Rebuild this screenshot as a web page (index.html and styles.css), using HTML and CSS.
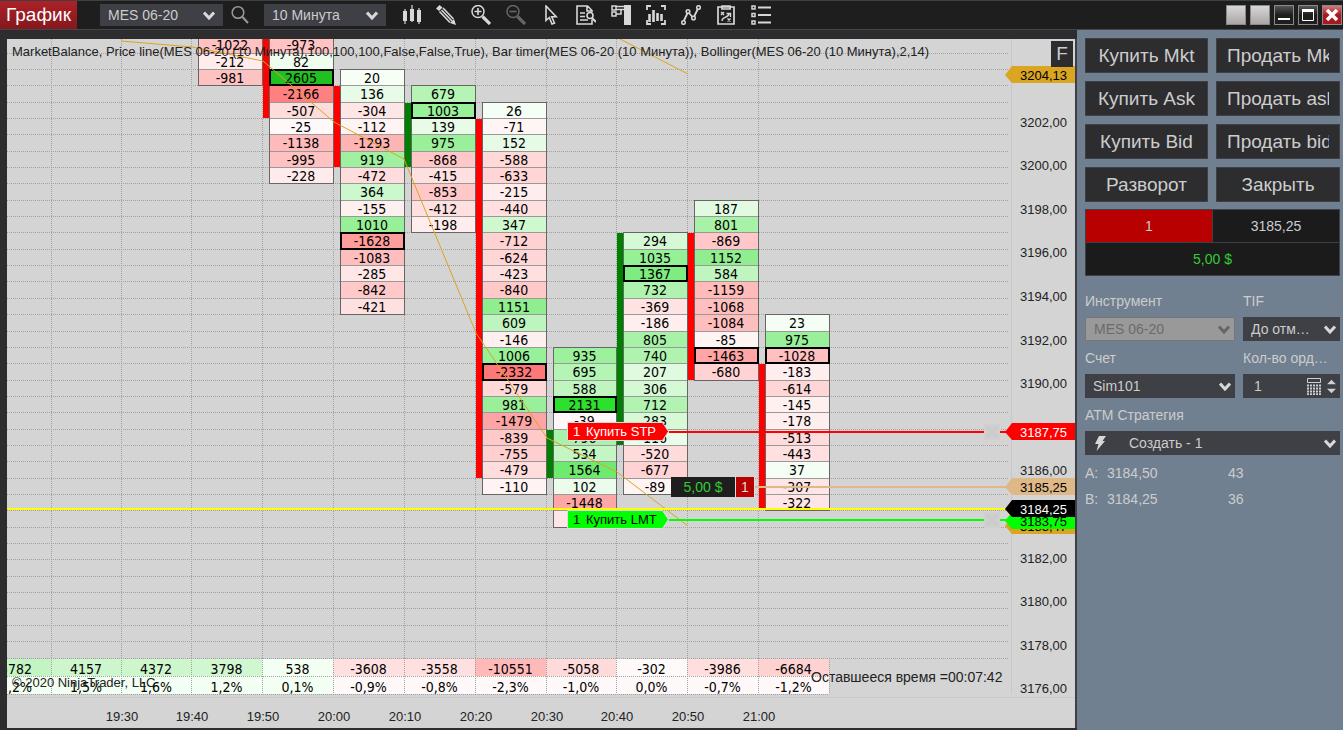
FILE: index.html
```html
<!DOCTYPE html>
<html lang="ru">
<head>
  <meta charset="UTF-8" />
  <meta name="viewport" content="width=device-width, initial-scale=1" />
  <title>График</title>
  <link rel="stylesheet" href="styles.css">
</head>
<body>
  <header class="toolbar">
    <h1 class="title">График</h1>

    <div class="select top-instrument">
      <select aria-label="Инструмент графика"><option>MES 06-20</option></select>
      <svg class="chevron" viewBox="0 0 12 9"><path d="M1 1.5l5 5.5 5-5.5"/></svg>
    </div>
    <button class="tool search" type="button" aria-label="Поиск">
      <svg viewBox="0 0 20 20"><circle cx="8" cy="7.500" r="5.800" stroke-width="1.500"/><path d="M12.500 12l5.500 6" stroke-width="2"/></svg>
    </button>
    <div class="select top-period">
      <select aria-label="Период"><option>10 Минута</option></select>
      <svg class="chevron" viewBox="0 0 12 9"><path d="M1 1.5l5 5.5 5-5.5"/></svg>
    </div>

    <nav class="tools">
      <button class="tool" type="button" aria-label="Тип бара">
        <svg viewBox="0 0 20 20"><path d="M4 4v15M11 0v17M18 3v16" stroke-width="1.200"/><path d="M4 6v10M11 4v12M18 5v12" stroke-width="4"/></svg>
      </button>
      <button class="tool" type="button" aria-label="Рисование">
        <svg viewBox="0 0 20 20"><path class="fill" d="M20 20l-6-2 4-4z"/><path class="fill" d="M0 3.500L3.500 0l3 2.500-3.500 3.500z"/><path d="M3.500 6.500l10.500 11M7 3l10.500 11M5.500 5l10.500 11" stroke-width="1.600"/></svg>
      </button>
      <button class="tool" type="button" aria-label="Увеличить">
        <svg viewBox="0 0 20 20"><circle cx="7" cy="6.500" r="6" stroke-width="1.500"/><path d="M3.500 6.500h7M7 3v7" stroke-width="1.600"/><path d="M11.500 11.500l7.500 7.500" stroke-width="3.200"/></svg>
      </button>
      <button class="tool dim" type="button" aria-label="Уменьшить">
        <svg viewBox="0 0 20 20"><circle cx="7" cy="6.500" r="6" stroke-width="1.500"/><path d="M3.500 6.500h7" stroke-width="1.600"/><path d="M11.500 11.500l7.500 7.500" stroke-width="3.200"/></svg>
      </button>
      <button class="tool" type="button" aria-label="Курсор">
        <svg viewBox="0 0 20 20"><path d="M5 1v14.500l3.300-3 2.700 6.500 2.500-1-2.800-6.200h4.500z" stroke-width="1.600"/></svg>
      </button>
      <button class="tool" type="button" aria-label="Окно данных">
        <svg viewBox="0 0 20 20"><path d="M16 14.500V19H1V1h10.500L16 5.500V7M11 1v5h5M4 8h5M4 11.500h5M4 15h8" stroke-width="1.600"/><circle cx="14" cy="10.500" r="3" stroke-width="1.600"/><path d="M16 13l4 4" stroke-width="2"/></svg>
      </button>
      <button class="tool" type="button" aria-label="Торговля с графика">
        <svg viewBox="0 0 20 20"><path class="fill" d="M13 0h7v20h-7z"/><path d="M1 1h4v4H1zM1 7h4v4H1zM5 1.500h8M5 4.500h8M5 9h5V4.500" stroke-width="1.500"/></svg>
      </button>
      <button class="tool" type="button" aria-label="Индикаторы">
        <svg viewBox="0 0 20 20"><path d="M5 1H1v4M15 1h4v4M5 19H1v-4M15 19h4v-4" stroke-width="1.800"/><path d="M3.500 9v8M7.500 5v12M11.500 8v8M15.500 9v7" stroke-width="2.600"/></svg>
      </button>
      <button class="tool" type="button" aria-label="Ряды данных">
        <svg viewBox="0 0 20 20"><path d="M2 17.500L7 7l5.500 6 5-10.500" stroke-width="1.800"/><circle class="dot" cx="2.500" cy="17.500" r="1.800" stroke-width="1.500"/><circle class="dot" cx="7" cy="6.500" r="1.800" stroke-width="1.500"/><circle class="dot" cx="12.500" cy="13" r="1.800" stroke-width="1.500"/><circle class="dot" cx="17.500" cy="2.500" r="1.800" stroke-width="1.500"/></svg>
      </button>
      <button class="tool" type="button" aria-label="Стратегии">
        <svg viewBox="0 0 20 20"><path d="M2 2h16v17H2zM6 1h8v3H6z" stroke-width="1.700"/><path d="M5 7l3 3M8 7l-3 3M11.500 13.500l3 3M14.500 13.500l-3 3M6 16c0-5 6-2 7.500-8M10.500 8.500h4v3.500" stroke-width="1.400"/></svg>
      </button>
      <button class="tool" type="button" aria-label="Свойства">
        <svg viewBox="0 0 20 20"><path d="M1 1h3v3H1zM1 8.500h3v3H1zM1 16h3v3H1z" stroke-width="1.500"/><path d="M7 2.500h13M7 10h13M7 17.500h13" stroke-width="1.800"/></svg>
      </button>
    </nav>

    <div class="window-buttons">
      <button class="win light" type="button" aria-label="Связь инструмента"></button>
      <button class="win light" type="button" aria-label="Связь интервала"></button>
      <button class="win" type="button" aria-label="Свернуть"><svg viewBox="0 0 18 18"><path d="M3 13h12" stroke-width="2"/></svg></button>
      <button class="win" type="button" aria-label="Развернуть"><svg viewBox="0 0 18 18"><path d="M3.500 14.500v-10h11v10z" stroke-width="1"/><path d="M3 4.500h12" stroke-width="3"/></svg></button>
      <button class="win close" type="button" aria-label="Закрыть окно"><svg viewBox="0 0 18 18"><path d="M4 4l10 10M14 4L4 14" stroke-width="3.500"/></svg></button>
    </div>
  </header>

  <main class="workspace">
    <section class="chart">
      <svg id="plot" role="img" aria-label="Кластерный график MES 06-20"></svg>
      <button class="fixed-scale" type="button">F</button>
    </section>

    <aside class="trader">
      <div class="orders">
        <button type="button"><span>Купить Mkt</span></button>
        <button type="button"><span>Продать Mkt</span></button>
        <button type="button"><span>Купить Ask</span></button>
        <button type="button"><span>Продать ask</span></button>
        <button type="button"><span>Купить Bid</span></button>
        <button type="button"><span>Продать bid</span></button>
        <button type="button"><span>Разворот</span></button>
        <button type="button"><span>Закрыть</span></button>
      </div>

      <div class="position">
        <div class="qty">1</div>
        <div>3185,25</div>
        <div class="pnl">5,00 $</div>
      </div>

      <form class="settings">
        <div class="field">
          <label for="instrument">Инструмент</label>
          <div class="select disabled">
            <select id="instrument" disabled><option>MES 06-20</option></select>
            <svg class="chevron" viewBox="0 0 12 9"><path d="M1 1.5l5 5.5 5-5.5"/></svg>
          </div>
        </div>
        <div class="field">
          <label for="tif">TIF</label>
          <div class="select">
            <select id="tif"><option>До отм…</option></select>
            <svg class="chevron" viewBox="0 0 12 9"><path d="M1 1.5l5 5.5 5-5.5"/></svg>
          </div>
        </div>
        <div class="field">
          <label for="account">Счет</label>
          <div class="select">
            <select id="account"><option>Sim101</option></select>
            <svg class="chevron" viewBox="0 0 12 9"><path d="M1 1.5l5 5.5 5-5.5"/></svg>
          </div>
        </div>
        <div class="field">
          <label for="orderQty">Кол-во орд…</label>
          <div class="number">
            <input id="orderQty" type="text" inputmode="numeric" value="1">
            <svg class="calc" viewBox="0 0 14 17"><path d="M.5.500h13v4H.5z"/><path class="keys" d="M0 7.500h14M0 10.500h14M0 13.500h14M0 16.200h14"/></svg>
            <svg class="spin" viewBox="0 0 10 17"><path d="M0 6l5-5 5 5zM0 11l5 5 5-5z"/></svg>
          </div>
        </div>
        <div class="field wide">
          <label for="atm">ATM Стратегия</label>
          <div class="select atm">
            <select id="atm"><option>Создать - 1</option></select>
            <svg class="bolt" viewBox="0 0 12 15"><path d="M5 0h7L8.500 5H11L2.500 15l2-7H1z"/></svg>
            <svg class="chevron" viewBox="0 0 12 9"><path d="M1 1.5l5 5.5 5-5.5"/></svg>
          </div>
        </div>
      </form>

      <dl class="quotes">
        <dt>A:</dt><dd>3184,50</dd><dd>43</dd>
        <dt>B:</dt><dd>3184,25</dd><dd>36</dd>
      </dl>
    </aside>
  </main>

  <script src="chart.js"></script>
</body>
</html>
```
FILE: styles.css
```css
* {
  box-sizing: border-box;
  margin: 0;
  padding: 0;
}

body {
  display: flex;
  flex-direction: column;
  min-height: 100vh;
  background: #2d2d30;
  color: #ccc;
  font-family: "Liberation Sans", Arial, sans-serif;
  font-size: 14px;
}

button,
select,
input {
  font: inherit;
  color: inherit;
  border: none;
  border-radius: 0;
  outline: none;
}

button {
  cursor: pointer;
}

/* toolbar */

.toolbar {
  display: flex;
  align-items: center;
  height: 30px;
  background: #1e1e1e;
  border-top: 1px solid #3c4144;
  border-bottom: 1px solid #46464a;
}

.title {
  width: 77px;
  height: 28px;
  margin-right: 23px;
  background: linear-gradient(#ac2127, #84181d);
  color: #fff;
  font-size: 19px;
  font-weight: normal;
  line-height: 28px;
  text-align: center;
}

.select {
  display: grid;
  align-items: center;
  height: 24px;
  background: #3f3f46;
}

.select select {
  grid-area: 1 / 1;
  width: 100%;
  height: 100%;
  padding: 0 22px 0 8px;
  background: transparent;
  appearance: none;
}

.chevron {
  grid-area: 1 / 1;
  justify-self: end;
  width: 12px;
  height: 9px;
  margin-right: 4px;
  fill: none;
  stroke: #d8d8d8;
  stroke-width: 3;
  pointer-events: none;
}

.top-instrument,
.top-period {
  height: 22px;
}

.top-instrument {
  width: 123px;
}

.top-period {
  width: 122px;
}

.toolbar .chevron {
  margin-right: 8px;
}

.tools {
  display: flex;
  margin-left: 7px;
}

.tool {
  display: flex;
  align-items: center;
  justify-content: center;
  width: 35px;
  height: 24px;
  background: none;
}

.tool svg {
  width: 20px;
  height: 20px;
  fill: none;
  stroke: #d8d8d8;
}

.tool .fill {
  fill: #d8d8d8;
  stroke: none;
}

.tool .dot {
  fill: #1e1e1e;
}

.tool.dim svg {
  stroke: #666;
}

.tool.search {
  width: 41px;
  padding-right: 8px;
}

.tool.search svg {
  stroke: #999;
}

.window-buttons {
  display: flex;
  gap: 4px;
  margin-left: auto;
  padding-right: 1px;
}

.win {
  width: 20px;
  height: 20px;
  border: 1px solid #8a8a8a;
  background: linear-gradient(#555, #1e1e1e 50%);
}

.win svg {
  display: block;
  fill: none;
  stroke: #fff;
}

.win.light {
  background: linear-gradient(#d8d6d6, #aaa6a6);
}

.win.close {
  background: linear-gradient(#d07a7e, #a8181e 50%);
}

/* chart */

.workspace {
  display: flex;
  flex: 1;
}

.chart {
  position: relative;
  display: flex;
  flex: 1;
  min-width: 0;
  margin: 9px 0 2px 7px;
  border-right: 2px solid #403f45;
  background: #d4d4d4;
}

#plot {
  width: 100%;
  min-height: 689px;
  color: #222;
  font-size: 13px;
}

.fixed-scale {
  position: absolute;
  top: 2px;
  right: 2px;
  width: 22px;
  height: 26px;
  background: #2d2d30;
  font-size: 19px;
  line-height: 26px;
}

.grid {
  stroke: #a2a2a2;
  stroke-dasharray: 1 1;
  shape-rendering: crispEdges;
}

.frame,
.cell,
.candle,
.order-line {
  shape-rendering: crispEdges;
}

.cell {
  stroke: #999;
}

.frame {
  fill: none;
  stroke: #666;
}

.frame.poc {
  stroke: #000;
  stroke-width: 2;
}

.candle.up {
  fill: #008000;
}

.candle.down {
  fill: #f00;
}

.volume {
  fill: #000;
  font-family: "DejaVu Sans Condensed", "Noto Sans", sans-serif;
  font-size: 14px;
  text-anchor: middle;
}

.band {
  fill: none;
  stroke: #daa520;
}

.separator {
  stroke: #c8c8c8;
}

.time {
  fill: #222;
  text-anchor: middle;
}

.price {
  text-anchor: end;
}

.note {
  fill: #222;
}

.timer {
  fill: #222;
  font-size: 14px;
}

.flag {
  stroke: #ddd;
}

.chip {
  font-size: 14px;
  text-anchor: middle;
}

.cancel {
  stroke: #c9c9c9;
  stroke-width: 2;
}

/* order panel */

.trader {
  width: 266px;
  padding: 8px 3px 8px 8px;
  background: #708090;
}

.orders {
  display: grid;
  grid-template-columns: 123px 1fr;
  gap: 8px;
}

.orders button {
  min-width: 0;
  height: 35px;
  padding: 0 10px;
  border: 1px solid #3f3f46;
  background: #2d2d30;
  font-size: 19px;
}

.orders span {
  display: block;
  overflow: hidden;
  white-space: nowrap;
}

.position {
  display: grid;
  grid-template-columns: 1fr 1fr;
  gap: 1px;
  margin-top: 7px;
  padding: 1px;
  background: #3f3f46;
  line-height: 32px;
  text-align: center;
}

.position div {
  background: #1b1b1b;
}

.position .qty {
  background: #b80000;
}

.position .pnl {
  grid-column: span 2;
  color: #32cd32;
}

.settings {
  display: grid;
  grid-template-columns: 150px 1fr;
  gap: 9px 8px;
  margin-top: 17px;
}

.field {
  min-width: 0;
}

.field.wide {
  grid-column: span 2;
}

.field label {
  display: block;
  height: 24px;
  line-height: 16px;
  white-space: nowrap;
}

.select.disabled {
  border: 1px solid #777;
  background: #999;
  color: #6b6b6b;
}

.select.disabled select {
  opacity: 1;
}

.disabled .chevron {
  stroke: #666;
}

.select.atm select {
  padding-left: 44px;
}

.bolt {
  grid-area: 1 / 1;
  width: 12px;
  height: 15px;
  margin-left: 9px;
  fill: #d8d8d8;
  pointer-events: none;
}

.number {
  display: flex;
  align-items: center;
  gap: 6px;
  height: 24px;
  padding: 0 4px 0 11px;
  background: #3f3f46;
}

.number input {
  flex: 1;
  min-width: 0;
  background: transparent;
}

.calc {
  width: 14px;
  height: 17px;
  fill: none;
  stroke: #d0d0d0;
}

.calc .keys {
  stroke-width: 2;
  stroke-dasharray: 2 1;
}

.spin {
  width: 9px;
  height: 17px;
  fill: #d0d0d0;
}

.quotes {
  display: grid;
  grid-template-columns: 22px 121px 1fr;
  margin-top: 5px;
  line-height: 26px;
}
```
FILE: chart.js
```js
const NS = "http://www.w3.org/2000/svg";
const plot = document.getElementById("plot");

// right edge of each ten-minute bar
const barX = [44, 114, 184, 255, 326, 397, 468, 539, 609, 680, 751, 822];
const times = ["19:30", "19:40", "19:50", "20:00", "20:10", "20:20", "20:30", "20:40", "20:50", "21:00"];

// bar: index in barX, first row, highlighted value, candle [direction, top, bottom]
const bars = [
  { bar: 2, row: -2, values: [-1022, -212, -981] },
  { bar: 3, row: -2, poc: 2605, candle: ["down", 0, 79],
    values: [-973, 82, 2605, -2166, -507, -25, -1138, -995, -228] },
  { bar: 4, row: 0, poc: -1628, candle: ["down", 47, 128],
    values: [20, 136, -304, -112, -1293, 919, -472, 364, -155, 1010, -1628, -1083, -285, -842, -421] },
  { bar: 5, row: 1, poc: 1003, candle: ["up", 64, 128],
    values: [679, 1003, 139, 975, -868, -415, -853, -412, -198] },
  { bar: 6, row: 2, poc: -2332, candle: ["down", 80, 439],
    values: [26, -71, 152, -588, -633, -215, -440, 347, -712, -624, -423, -840, 1151, 609, -146, 1006, -2332, -579, 981, -1479, -839, -755, -479, -110] },
  { bar: 7, row: 17, poc: 2131, candle: ["up", 391, 439],
    values: [935, 695, 588, 2131, -39, 796, 534, 1564, 102, -1448, -310] },
  { bar: 8, row: 10, poc: 1367, candle: ["up", 194, 406],
    values: [294, 1035, 1367, 732, -369, -186, 805, 740, 207, 306, 712, 283, 116, -520, -677, -89] },
  { bar: 9, row: 8, poc: -1463, candle: ["down", 194, 341],
    values: [187, 801, -869, 1152, 584, -1159, -1068, -1084, -85, -1463, -680] },
  { bar: 10, row: 15, poc: -1028, candle: ["down", 325, 471],
    values: [23, 975, -1028, -183, -614, -145, -178, -513, -443, 37, -307, -322] }
];

const totals = [
  ["5782", "2,2%", "#c3f5c3"], ["4157", "1,5%", "#cdf6cd"], ["4372", "1,6%", "#cdf6cd"],
  ["3798", "1,2%", "#d0f7d0"], ["538", "0,1%", "#f3fff3"], ["-3608", "-0,9%", "#ffe0e0"],
  ["-3558", "-0,8%", "#ffe0e0"], ["-10551", "-2,3%", "#ffb9b9"], ["-5058", "-1,0%", "#ffdada"],
  ["-302", "0,0%", "#fffafa"], ["-3986", "-0,7%", "#ffdede"], ["-6684", "-1,2%", "#ffd2d2"]
];

const greens = [[0, 248, 255, 248], [150, 230, 251, 230], [364, 205, 248, 205], [588, 192, 245, 192],
  [805, 168, 242, 168], [1000, 152, 240, 152], [1152, 144, 238, 144], [1564, 110, 234, 110],
  [2131, 46, 224, 46], [2605, 34, 191, 34]];
const reds = [[0, 255, 250, 250], [150, 255, 240, 240], [300, 255, 230, 230], [500, 255, 220, 220],
  [700, 255, 210, 210], [850, 255, 200, 200], [1080, 255, 190, 190], [1293, 255, 180, 180],
  [1463, 255, 165, 165], [2166, 255, 128, 128], [2332, 255, 120, 120]];

function el(name, attrs, parent = plot, text = "") {
  const node = document.createElementNS(NS, name);
  for (const key in attrs) node.setAttribute(key, attrs[key]);
  if (text) node.textContent = text;
  parent.appendChild(node);
  return node;
}

function rowY(k) {
  return Math.floor(30.4 + k * 16.35);
}

function shade(value) {
  const stops = value < 0 ? reds : greens;
  const v = Math.abs(value);
  let i = 1;
  while (i < stops.length - 1 && stops[i][0] < v) i++;
  const a = stops[i - 1], b = stops[i];
  const t = Math.min(1, (v - a[0]) / (b[0] - a[0]));
  const c = [1, 2, 3].map(n => Math.round(a[n] + (b[n] - a[n]) * t));
  return `rgb(${c.join(",")})`;
}

// grid
for (let k = -1; k <= 36; k++) {
  const y = rowY(k) + 0.5;
  el("line", { class: "grid", x1: 0, x2: "100%", y1: y, y2: y });
}
for (let i = 0; i < 11; i++) {
  el("line", { class: "grid", x1: barX[i] + 0.5, x2: barX[i] + 0.5, y1: 0, y2: 655 });
}
el("line", { class: "separator", x1: 0, x2: "100%", y1: 658.5, y2: 658.5 });

// clusters
bars.forEach(({ bar, row, values, poc, candle }) => {
  const x = barX[bar] + 7;
  const w = barX[bar + 1] - x;
  if (candle) {
    el("rect", { class: "candle " + candle[0], x: x - 6, y: candle[1], width: 6, height: candle[2] - candle[1] });
  }
  values.forEach((value, i) => {
    const y = rowY(row + i);
    const h = rowY(row + i + 1) - y;
    el("rect", { class: "cell", x: x + 0.5, y: y + 0.5, width: w, height: h, fill: shade(value) });
    el("text", { class: "volume", x: x + w / 2, y: y + 14 }, plot, String(value));
  });
  const top = rowY(row);
  el("rect", { class: "frame", x: x + 0.5, y: top + 0.5, width: w, height: rowY(row + values.length) - top });
  const p = values.indexOf(poc);
  if (p >= 0) {
    const y = rowY(row + p);
    el("rect", { class: "frame poc", x: x + 1, y: y + 1, width: w - 1, height: rowY(row + p + 1) - y - 1 });
  }
});

// delta totals under the bars
totals.forEach(([sum, percent, color], i) => {
  const x2 = barX[i];
  const x1 = i ? barX[i - 1] : -26;
  const pale = sum[0] === "-" ? "#fff8f8" : "#f3fff3";
  el("rect", { x: x1, y: 620, width: x2 - x1, height: 17, fill: color });
  el("rect", { x: x1, y: 637, width: x2 - x1, height: 18, fill: pale });
  el("text", { class: "volume", x: (x1 + x2) / 2, y: 635 }, plot, sum);
  el("text", { class: "volume", x: (x1 + x2) / 2, y: 653 }, plot, percent);
});
barX.forEach(x => el("line", { class: "grid", x1: x + 0.5, x2: x + 0.5, y1: 619, y2: 655 }));
[619.5, 637.5, 655.5].forEach(y => el("line", { class: "grid", x1: 0, x2: 822, y1: y, y2: y }));

// bollinger bands
el("polyline", { class: "band", points: "114,2 185,8 256,22 327,83 397,120 469,294 540,399 610,433 681,487" });
el("polyline", { class: "band", points: "613,0 681,35" });

el("text", { class: "note", x: 5, y: 17 }, plot,
  "MarketBalance, Price line(MES 06-20 (10 Минута),100,100,100,False,False,True), Bar timer(MES 06-20 (10 Минута)), Bollinger(MES 06-20 (10 Минута),2,14)");
el("text", { class: "note", x: 5, y: 648 }, plot, "© 2020 NinjaTrader, LLC");

times.forEach((t, i) => el("text", { class: "time", x: barX[i + 1] + 1, y: 682 }, plot, t));

// order and price lines run up to the axis
function priceLine(x, y, color) {
  el("line", { class: "order-line", x1: x, x2: "100%", y1: y, y2: y, stroke: color, "stroke-width": 2 });
}
priceLine(662, 393, "#f00");
priceLine(748, 448, "#deb887");
priceLine(0, 470, "#ff0");
priceLine(662, 481, "#0f0");

function flag(y, color, ink, text) {
  el("path", { class: "flag", d: `M560.5 ${y - 9}h95l6 9-6 9h-95z`, fill: color });
  el("text", { x: 566, y: y + 4, fill: ink }, plot, "1");
  el("text", { x: 579, y: y + 4, fill: ink }, plot, text);
}
flag(392.5, "#f00", "#fff", "Купить STP");
flag(480.5, "#0f0", "#000", "Купить LMT");

el("rect", { x: 664, y: 438, width: 64, height: 20, fill: "#1e1e1e" });
el("text", { class: "chip", x: 696, y: 453, fill: "#32cd32" }, plot, "5,00 $");
el("rect", { x: 728, y: 438, width: 20, height: 20, fill: "#ddd" });
el("rect", { x: 729, y: 438, width: 18, height: 20, fill: "#b80000" });
el("text", { class: "chip", x: 738, y: 453, fill: "#ddd" }, plot, "1");

// price axis, anchored to the right edge with x running negative from there
const axis = el("svg", { x: "100%", overflow: "visible" });
el("rect", { x: -66, y: 0, width: 66, height: 655, fill: "#d4d4d4" }, axis);
el("line", { class: "separator", x1: -63.5, x2: -63.5, y1: 0, y2: 655 }, axis);
el("text", { class: "timer", x: -264, y: 643 }, axis, "Оставшееся время =00:07:42");
for (let price = 3202; price >= 3176; price -= 2) {
  if (price === 3188 || price === 3184) continue;
  el("text", { class: "price note", x: -8, y: Math.round(87.5 + (3202 - price) * 21.8) }, axis, price + ",00");
}
[393, 481].forEach(y => {
  el("rect", { x: -91, y: y - 8, width: 16, height: 16, fill: "#d0d0d0" }, axis);
  el("path", { class: "cancel", d: `M-88 ${y - 5}l10 10m0-10l-10 10` }, axis);
});

function marker(y, color, ink, text) {
  el("path", { d: `M-70 ${y}l7-9H0v17h-63z`, fill: color }, axis);
  el("text", { class: "price", x: -8, y: y + 5, fill: ink }, axis, text);
}
marker(36, "#daa520", "#000", "3204,13");
marker(393, "#f00", "#fff", "3187,75");
marker(448, "#deb887", "#000", "3185,25");
marker(487, "#daa520", "#000", "3183,47");
marker(482, "#0f0", "#000", "3183,75");
marker(470, "#000", "#fff", "3184,25");
```
